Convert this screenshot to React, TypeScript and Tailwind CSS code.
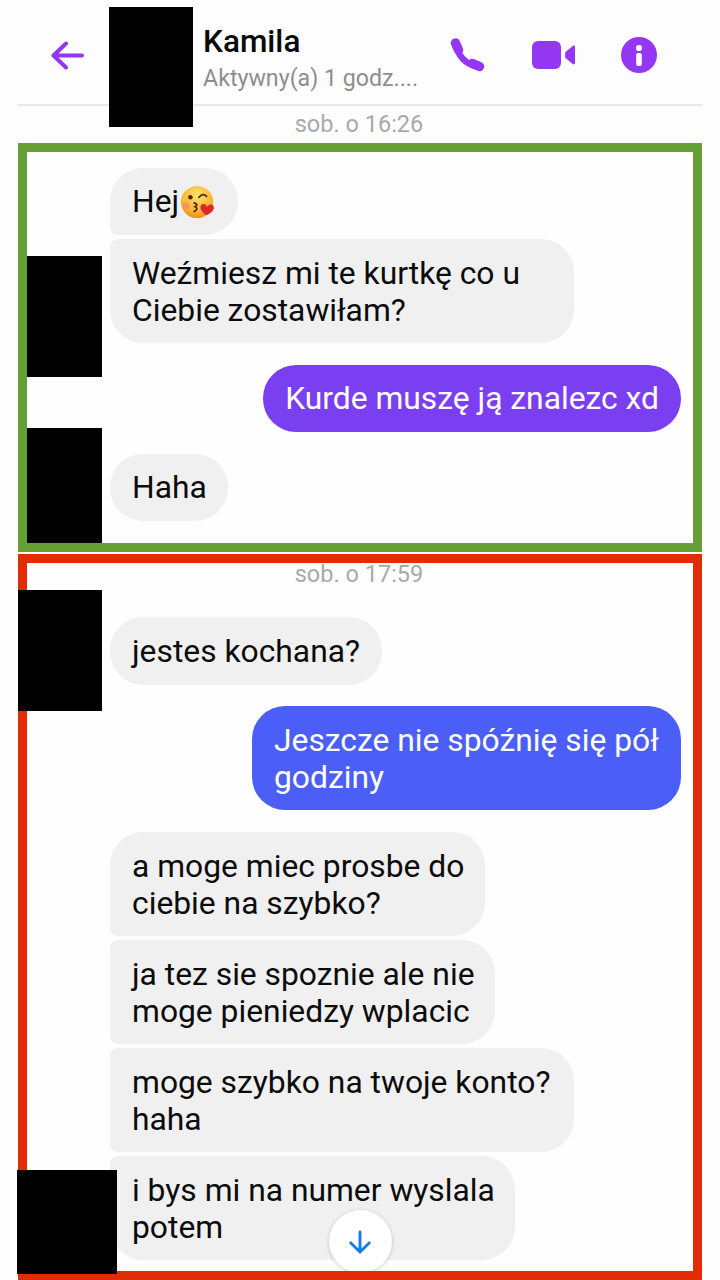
import React from "react";

const incoming = "bg-[#f0f0f0] text-[#0c0c0c]";

function Bubble({ children, className = "" }: { children: React.ReactNode; className?: string }) {
  return (
    <div className={`whitespace-nowrap px-[22px] pb-[14px] pt-[16px] text-[31.8px] leading-[37px] ${className}`}>{children}</div>
  );
}

function Emoji() {
  return (
    <svg width="36" height="36" viewBox="0 0 38 38" className="ml-[1px] shrink-0">
      <defs>
        <radialGradient id="face" cx="50%" cy="30%" r="72%">
          <stop offset="0%" stopColor="#ffe06a" />
          <stop offset="65%" stopColor="#fbb733" />
          <stop offset="100%" stopColor="#ee8a1c" />
        </radialGradient>
      </defs>
      <circle cx="18" cy="19" r="17" fill="url(#face)" />
      <circle cx="6.500" cy="23" r="4" fill="#f58a6b" opacity="0.7" />
      <circle cx="11" cy="14" r="2.400" fill="#4a2c14" />
      <path d="M20 14 q4 -5 8 -1" fill="none" stroke="#4a2c14" strokeWidth="2" strokeLinecap="round" />
      <path d="M15 20 q5 2 1 4 q4 2 -1 5" fill="none" stroke="#4a2c14" strokeWidth="2" strokeLinecap="round" />
      <path d="M28 33 C20 28 20 21 25 21 C27 21 28 23 28.500 24 C30 22 32 21 34 22 C38 25 35 30 28 33 Z" fill="#e0262c" />
    </svg>
  );
}

function Black({ className }: { className: string }) {
  return <div className={`absolute bg-black ${className}`} />;
}

export default function App() {
  return (
    <div className="relative h-[1280px] w-[720px] overflow-hidden bg-[#fdfdfd] font-['Roboto',sans-serif]">
      <header className="mx-[18px] flex h-[106px] items-center border-b-2 border-[#e9e9e9] pl-[33px] pr-[45px] pt-[6px]">
        <svg width="33" height="29" viewBox="0 0 33 29" fill="none" stroke="#9537f2" strokeWidth="4" strokeLinecap="round" strokeLinejoin="round">
          <path d="M31 14.500H2.500M15 2.500 2.500 14.500 15 26.500" />
        </svg>
        <div className="ml-[119px] mt-[6px] flex min-w-0 flex-col">
          <div className="text-[31.500px] font-medium leading-[36px] text-[#0a0a0a]">Kamila</div>
          <div className="mt-[4px] text-[23.200px] leading-[28px] text-[#8e8e8e]">Aktywny(a) 1 godz....</div>
        </div>
        <svg className="ml-auto" width="35" height="34" viewBox="0 0 35 34" fill="none" stroke="#9537f2" strokeLinecap="round">
          <path d="M6.500 6C6.500 16 15 26 27 28.500" strokeWidth="6.500" />
          <path d="M5.500 5 8.500 12" strokeWidth="9.500" />
          <path d="M22.500 25.500 29.500 28.500" strokeWidth="9.500" />
        </svg>
        <svg className="ml-[47px]" width="43" height="28" viewBox="0 0 43 28" fill="#9537f2">
          <rect x="0" y="0" width="29" height="28" rx="6" />
          <path d="M33.500 11 41 4.800c.9-.7 2 .1 2 1.200v16c0 1.100-1.100 1.900-2 1.200L33.500 17c-.5-.5-.5-5.500 0-6Z" />
        </svg>
        <svg className="ml-[46px]" width="36" height="36" viewBox="0 0 36 36">
          <circle cx="18" cy="18" r="18" fill="#9537f2" />
          <circle cx="18" cy="11" r="3.100" fill="#fff" />
          <rect x="15.200" y="16" width="5.600" height="13" rx="2" fill="#fff" />
        </svg>
      </header>
      <div className="h-[37px] pr-[2px] pt-[3px] text-center text-[23.500px] leading-[30px] text-[#a9a9a9]">sob. o 16:26</div>

      <section className="ml-[18px] box-border flex h-[409px] w-[684px] flex-col border-[9px] border-[#659f35] bg-[#fefefe] pl-[83px] pr-[12px] pt-[16px]">
        <Bubble className={`flex h-[67px] w-[128px] items-center !py-0 rounded-[33px] rounded-bl-[8px] ${incoming}`}>
          Hej<Emoji />
        </Bubble>
        <Bubble className={`mt-[4px] w-[464px] rounded-[33px] rounded-tl-[8px] ${incoming}`}>
          Weźmiesz mi te kurtkę co u<br />Ciebie zostawiłam?
        </Bubble>
        <Bubble className="mt-[22px] self-end rounded-[33px] !pb-[15px] !pt-[15px] bg-[#7b3ff2] text-white">Kurde muszę ją znalezc xd</Bubble>
        <Bubble className={`mt-[22px] w-[118px] self-start rounded-[33px] !pb-[15px] !pt-[15px] ${incoming}`}>Haha</Bubble>
      </section>

      <section className="relative ml-[18px] mt-[2px] box-border flex h-[726px] w-[684px] flex-col overflow-hidden border-[9px] border-[#e32b06] bg-[#fefefe] pl-[83px] pr-[12px]">
        <div className="-ml-[73px] text-center text-[23.500px] leading-[22px] text-[#a9a9a9]">sob. o 17:59</div>
        <Bubble className={`mt-[32px] self-start rounded-[33px] !pb-[15px] ${incoming}`}>jestes kochana?</Bubble>
        <Bubble className="mt-[21px] w-[429px] self-end rounded-[33px] bg-[#4b5ef7] text-white">
          Jeszcze nie spóźnię się pół<br />godziny
        </Bubble>
        <Bubble className={`mt-[22px] w-[375px] rounded-[33px] rounded-bl-[8px] ${incoming}`}>
          a moge miec prosbe do<br />ciebie na szybko?
        </Bubble>
        <Bubble className={`mt-[4px] w-[385px] rounded-l-[8px] rounded-r-[33px] ${incoming}`}>
          ja tez sie spoznie ale nie<br />moge pieniedzy wplacic
        </Bubble>
        <Bubble className={`mt-[4px] w-[464px] rounded-l-[8px] rounded-r-[33px] ${incoming}`}>
          moge szybko na twoje konto?<br />haha
        </Bubble>
        <Bubble className={`mt-[4px] w-[405px] rounded-[33px] rounded-tl-[8px] ${incoming}`}>
          i bys mi na numer wyslala<br />potem
        </Bubble>
        <div className="absolute left-[302px] top-[647px] flex h-[63px] w-[63px] items-center justify-center rounded-full bg-white shadow-[0_1px_4px_rgba(0,0,0,0.2)]">
          <svg width="22" height="24" viewBox="0 0 24 26" fill="none" stroke="#1a7de6" strokeWidth="3.200" strokeLinecap="round" strokeLinejoin="round" className="mr-[2px]">
            <path d="M12 2v22M2 14l10 10 10-10" />
          </svg>
        </div>
      </section>

      <Black className="left-[109px] top-[7px] h-[120px] w-[84px]" />
      <Black className="left-[27px] top-[256px] h-[121px] w-[75px]" />
      <Black className="left-[27px] top-[428px] h-[115px] w-[75px]" />
      <Black className="left-[18px] top-[590px] h-[121px] w-[84px]" />
      <Black className="left-[17px] top-[1170px] h-[104px] w-[100px]" />
    </div>
  );
}
